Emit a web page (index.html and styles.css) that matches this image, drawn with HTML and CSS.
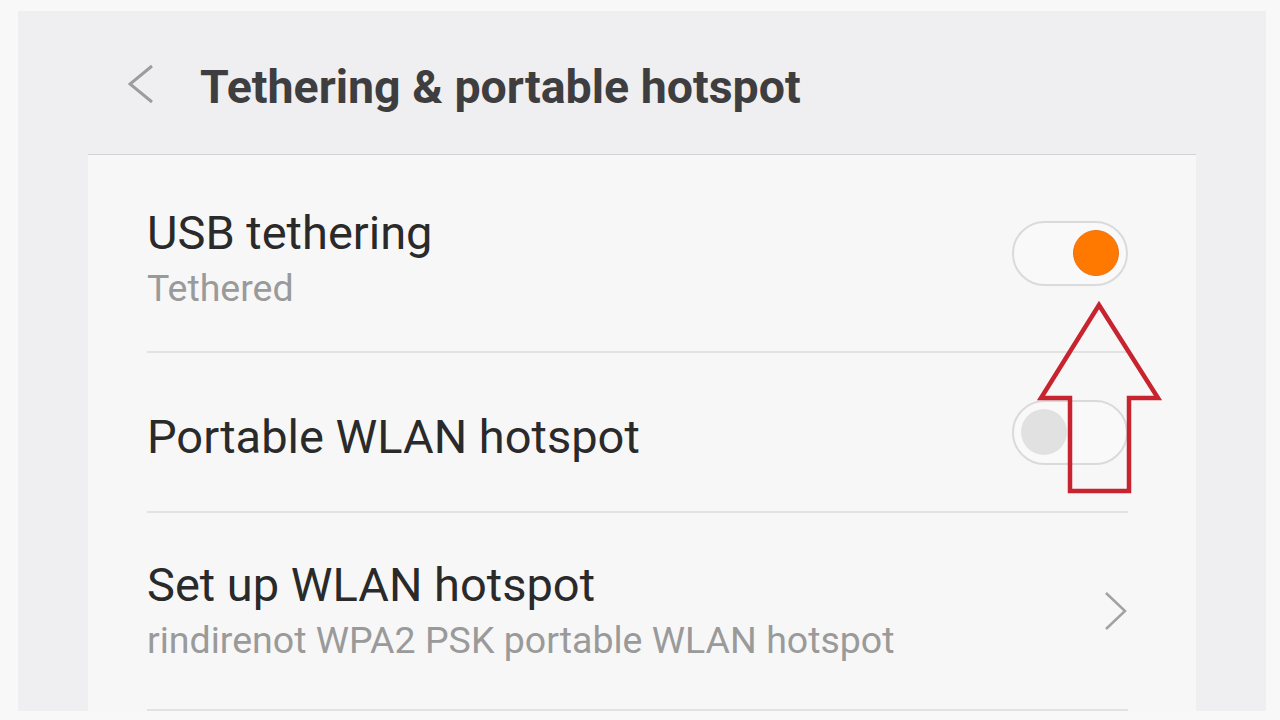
FILE: index.html
```html
<!DOCTYPE html>
<html lang="en">
<head>
  <meta charset="UTF-8" />
  <title>Tethering &amp; portable hotspot</title>
  <meta name="viewport" content="width=device-width, initial-scale=1.0" />
  <link rel="stylesheet" href="styles.css">
</head>
<body>

  <div class="screen">
    <div class="header">
      <svg class="back-icon" width="26" height="40" viewBox="0 0 26 40">
        <polyline points="24,2 2,20 24,38" />
      </svg>
      <h1>Tethering &amp; portable hotspot</h1>
    </div>

    <div class="card">
      <div class="row row-tall">
        <div class="row-text">
          <div class="row-title">USB tethering</div>
          <div class="row-sub">Tethered</div>
        </div>
        <div class="switch on"><span class="knob"></span></div>
      </div>

      <div class="row">
        <div class="row-text">
          <div class="row-title">Portable WLAN hotspot</div>
        </div>
        <div class="switch"><span class="knob"></span></div>
      </div>

      <div class="row row-tall row-setup">
        <div class="row-text">
          <div class="row-title">Set up WLAN hotspot</div>
          <div class="row-sub">rindirenot WPA2 PSK portable WLAN hotspot</div>
        </div>
        <svg class="next-icon" width="24" height="40" viewBox="0 0 24 40">
          <polyline points="2,2 21,20 2,38" />
        </svg>
      </div>
    </div>

    <!-- annotation drawn over the switches -->
    <svg class="arrow" width="140" height="200" viewBox="0 0 140 200">
      <polygon points="69,5 128,98 99,98 99,191 40,191 40,98 11,98" />
    </svg>
  </div>

</body>
</html>
```

FILE: styles.css
```css
/* Basic reset */
* {
  margin: 0;
  padding: 0;
  box-sizing: border-box;
}

body {
  font-family: Roboto, "Noto Sans", sans-serif;
  background: #f8f8f8;
  width: 1280px;
  height: 720px;
  overflow: hidden;
  padding: 11px 14px 0 18px;
}

.screen {
  position: relative;
  height: 700px;
  background-color: #efeff1;
  display: flex;
  flex-direction: column;
}

.header {
  height: 143px;
  display: flex;
  align-items: center;
  padding-left: 110px;
}

.back-icon {
  margin-top: 2px;
  fill: none;
  stroke: #9c9c9e;
  stroke-width: 3;
}

.header h1 {
  margin-left: 46px;
  margin-top: 8px;
  font-size: 46.5px;
  font-weight: 700;
  color: #3e3e40;
}

.card {
  flex: 1;
  margin-left: 70px;
  width: 1108px;
  background-color: #f7f7f7;
  border-top: 1px solid #d2d2d4;
}

.row {
  display: flex;
  align-items: center;
  justify-content: space-between;
  height: 160px;
  margin: 0 68px 0 59px;
  border-bottom: 2px solid #e2e2e2;
}

.row-tall {
  height: 198px;
}

.row-text {
  padding-top: 10px;
}

.row-setup .row-text {
  padding-top: 0;
  padding-bottom: 2px;
}

.row-title {
  font-size: 47px;
  line-height: 56px;
  color: #2a2a2a;
}

.row-sub {
  font-size: 37.5px;
  line-height: 46px;
  margin-top: 4px;
  color: #9a9a9a;
}

.switch {
  width: 116px;
  height: 65px;
  border: 2px solid #dadada;
  border-radius: 33px;
  background-color: #f9f9f9;
  display: flex;
  align-items: center;
  padding: 0 7px;
}

.switch .knob {
  width: 46px;
  height: 46px;
  border-radius: 50%;
  background-color: #e1e1e1;
}

.switch.on {
  justify-content: flex-end;
}

.switch.on .knob {
  background-color: #ff7900;
  border: 1px solid #e8731a;
}

.next-icon {
  fill: none;
  stroke: #a2a2a2;
  stroke-width: 2.5;
}

.arrow {
  position: absolute;
  left: 1012px;
  top: 289px;
  overflow: visible;
  fill: none;
  stroke: #c8242f;
  stroke-width: 4.5;
}
```
